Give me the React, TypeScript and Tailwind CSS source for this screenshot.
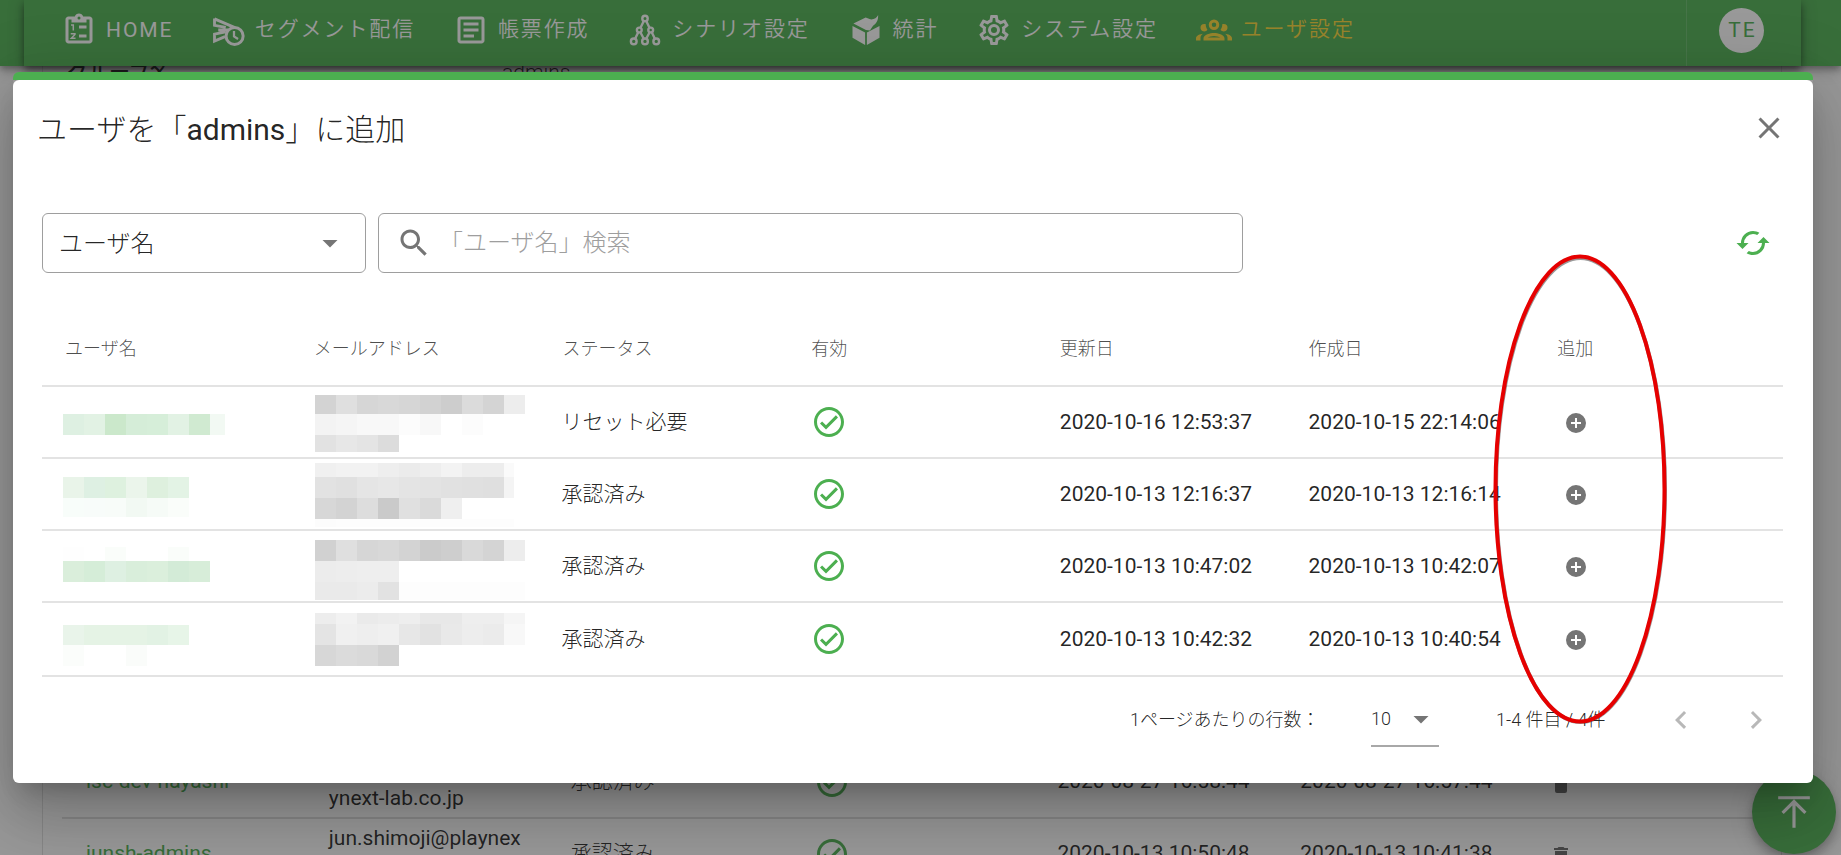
import type { ReactNode } from "react";

const CHECK_CIRCLE =
  "M12 2C6.5 2 2 6.5 2 12S6.5 22 12 22 22 17.5 22 12 17.5 2 12 2M12 20C7.59 20 4 16.41 4 12S7.59 4 12 4 20 7.59 20 12 16.41 20 12 20M16.59 7.58L10 14.17L7.41 11.59L6 13L10 17L18 9L16.59 7.58Z";
const PLUS_CIRCLE = "M17 13H13V17H11V13H7V11H11V7H13V11H17M12 2A10 10 0 0 0 2 12A10 10 0 0 0 12 22A10 10 0 0 0 22 12A10 10 0 0 0 12 2Z";
const CLOSE = "M19 6.41L17.59 5L12 10.59L6.41 5L5 6.41L10.59 12L5 17.59L6.41 19L12 13.41L17.59 19L19 17.59L13.41 12L19 6.41Z";
const MENU_DOWN = "M7 10L12 15L17 10H7Z";
const MAGNIFY =
  "M15.5 14h-.79l-.28-.27C15.41 12.59 16 11.11 16 9.5 16 5.91 13.09 3 9.5 3S3 5.91 3 9.5 5.91 16 9.5 16c1.61 0 3.09-.59 4.23-1.57l.27.28v.79l5 4.99L20.49 19l-4.99-5zm-6 0C7.01 14 5 11.99 5 9.5S7.01 5 9.5 5 14 7.01 14 9.5 11.99 14 9.5 14z";
const CACHED =
  "M19 8L15 12H18A6 6 0 0 1 12 18C11 18 10.03 17.75 9.2 17.3L7.74 18.76C8.97 19.54 10.43 20 12 20A8 8 0 0 0 20 12H23M6 12A6 6 0 0 1 12 6C13 6 13.97 6.25 14.8 6.7L16.26 5.24C15.03 4.46 13.57 4 12 4A8 8 0 0 0 4 12H1L5 16L9 12";
const CHEVRON_LEFT = "M15.41 16.58L10.83 12L15.41 7.41L14 6L8 12L14 18L15.41 16.58Z";
const CHEVRON_RIGHT = "M8.59 16.58L13.17 12L8.59 7.41L10 6L16 12L10 18L8.59 16.58Z";
const DELETE = "M19 4H15.5L14.5 3H9.5L8.5 4H5V6H19M6 19A2 2 0 0 0 8 21H16A2 2 0 0 0 18 19V7H6V19Z";
const ARROW_TOP = "M4.08 11.92L12 4L19.92 11.92L18.5 13.33L13 7.83V22H11V7.83L5.5 13.33L4.08 11.92M12 4H22V2H2V4H12Z";
const COG =
  "M12,8A4,4 0 0,1 16,12A4,4 0 0,1 12,16A4,4 0 0,1 8,12A4,4 0 0,1 12,8M12,10A2,2 0 0,0 10,12A2,2 0 0,0 12,14A2,2 0 0,0 14,12A2,2 0 0,0 12,10M10,22C9.75,22 9.54,21.82 9.5,21.58L9.13,18.93C8.5,18.68 7.96,18.34 7.44,17.94L4.95,18.95C4.73,19.03 4.46,18.95 4.34,18.73L2.34,15.27C2.21,15.05 2.27,14.78 2.46,14.63L4.57,12.97L4.5,12L4.57,11L2.46,9.37C2.27,9.22 2.21,8.95 2.34,8.73L4.34,5.27C4.46,5.05 4.73,4.96 4.95,5.05L7.44,6.05C7.96,5.66 8.5,5.32 9.13,5.07L9.5,2.42C9.54,2.18 9.75,2 10,2H14C14.25,2 14.46,2.18 14.5,2.42L14.87,5.07C15.5,5.32 16.04,5.66 16.56,6.05L19.05,5.05C19.27,4.96 19.54,5.05 19.66,5.27L21.66,8.73C21.79,8.95 21.73,9.22 21.54,9.37L19.43,11L19.5,12L19.43,13L21.54,14.63C21.73,14.78 21.79,15.05 21.66,15.27L19.66,18.73C19.54,18.95 19.27,19.04 19.05,18.95L16.56,17.95C16.04,18.34 15.5,18.68 14.87,18.93L14.5,21.58C14.46,21.82 14.25,22 14,22H10M11.25,4L10.88,6.61C9.68,6.86 8.62,7.5 7.85,8.39L5.44,7.35L4.69,8.65L6.8,10.2C6.4,11.37 6.4,12.64 6.8,13.8L4.68,15.36L5.43,16.66L7.86,15.62C8.63,16.5 9.68,17.14 10.87,17.38L11.24,20H12.76L13.13,17.39C14.32,17.14 15.37,16.5 16.14,15.62L18.57,16.66L19.32,15.36L17.2,13.81C17.6,12.64 17.6,11.37 17.2,10.2L19.31,8.65L18.56,7.35L16.15,8.39C15.38,7.5 14.32,6.86 13.12,6.62L12.75,4H11.25Z";
const ACCOUNT_GROUP =
  "M12,5A3.5,3.5 0 0,0 8.5,8.5A3.5,3.5 0 0,0 12,12A3.5,3.5 0 0,0 15.5,8.5A3.5,3.5 0 0,0 12,5M12,7A1.5,1.5 0 0,1 13.5,8.5A1.5,1.5 0 0,1 12,10A1.5,1.5 0 0,1 10.5,8.5A1.5,1.5 0 0,1 12,7M5.5,8A2.5,2.5 0 0,0 3,10.5C3,11.44 3.53,12.25 4.29,12.68C4.65,12.88 5.06,13 5.5,13C5.94,13 6.35,12.88 6.71,12.68C7.08,12.47 7.39,12.17 7.62,11.81C6.89,10.86 6.5,9.7 6.5,8.5C6.5,8.41 6.5,8.31 6.5,8.22C6.2,8.08 5.86,8 5.5,8M18.5,8C18.14,8 17.8,8.08 17.5,8.22C17.5,8.31 17.5,8.41 17.5,8.5C17.5,9.7 17.11,10.86 16.38,11.81C16.5,12 16.63,12.15 16.78,12.3C16.94,12.45 17.1,12.58 17.29,12.68C17.65,12.88 18.06,13 18.5,13C18.94,13 19.35,12.88 19.71,12.68C20.47,12.25 21,11.44 21,10.5A2.5,2.5 0 0,0 18.5,8M12,14C9.66,14 5,15.17 5,17.5V19H19V17.5C19,15.17 14.34,14 12,14M4.71,14.55C2.78,14.78 0,15.76 0,17.5V19H3V17.07C3,16.06 3.69,15.22 4.71,14.55M19.29,14.55C20.31,15.22 21,16.06 21,17.07V19H24V17.5C24,15.76 21.22,14.78 19.29,14.55M12,16C13.53,16 15.24,16.5 16.23,17H7.77C8.76,16.5 10.47,16 12,16Z";
const TEXT_BOX =
  "M5 3C3.89 3 3 3.89 3 5V19C3 20.11 3.89 21 5 21H19C20.11 21 21 20.11 21 19V5C21 3.89 20.11 3 19 3H5M5 5H19V19H5V5M7 7V9H17V7H7M7 11V13H17V11H7M7 15V17H14V15H7Z";

function Icon({ d, className }: { d: string; className: string }) {
  return (
    <svg viewBox="0 0 24 24" fill="currentColor" className={"shrink-0 " + className}>
      <path d={d} />
    </svg>
  );
}

function NavSvg({ children }: { children: ReactNode }) {
  return (
    <svg viewBox="0 0 24 24" fill="none" stroke="currentColor" className="size-9 shrink-0">
      {children}
    </svg>
  );
}

const clipboardIcon = (
  <NavSvg>
    <path
      fill="currentColor"
      stroke="none"
      fillRule="evenodd"
      d="M19 3H14.82C14.4 1.84 13.3 1 12 1S9.6 1.84 9.18 3H5C3.9 3 3 3.9 3 5V19C3 20.1 3.9 21 5 21H19C20.1 21 21 20.1 21 19V5C21 3.9 20.1 3 19 3M12 3A1 1 0 0 1 12 5A1 1 0 0 1 12 3M5 5H7V7H17V5H19V19H5Z"
    />
    <path strokeWidth="1" d="M6.7 8.6H8.2V12.3M6.5 14.5H9.3V15L6.9 17.5H9.7" />
    <path strokeWidth="2" d="M12 10H17M12 16H17" />
  </NavSvg>
);

const sendClockIcon = (
  <NavSvg>
    <path strokeWidth="1.9" d="M3 4.6L16.6 10.4M3 4.4V8.9L10.5 10.3M10.5 13.3L3 14.8V19.4L10 16.4M5.5 12H12" />
    <circle cx="16.4" cy="16" r="5.7" strokeWidth="2" />
    <path strokeWidth="1.5" d="M16 12.6V16.3L18.7 18" />
  </NavSvg>
);

const treeIcon = (
  <NavSvg>
    <g strokeWidth="1.6">
      <circle cx="12" cy="4.3" r="1.8" />
      <circle cx="8.2" cy="12" r="1.6" />
      <circle cx="15.8" cy="12" r="1.6" />
      <circle cx="4.5" cy="19.6" r="1.9" />
      <circle cx="12" cy="19.6" r="1.9" />
      <circle cx="19.5" cy="19.6" r="1.9" />
      <path d="M11.2 6L9 10.5M12.8 6L15 10.5M7.5 13.5L5.4 17.9M8.9 13.5L11.2 17.8M15.1 13.5L12.8 17.8M16.5 13.5L18.6 17.9" />
    </g>
  </NavSvg>
);

const boxIcon = (
  <NavSvg>
    <g fill="currentColor" stroke="none">
      <path d="M3 9.3L11.4 13.7V22L3 17.2Z" />
      <path d="M21 9.3L12.6 13.7V22L21 17.2Z" />
      <path d="M3.6 7.7L11.8 3.6L14.8 4.9C17.2 5.2 19.2 4 20.1 2C20.2 5.4 19.2 7.4 16.7 9.2L14.6 12.3L12 12Z" />
    </g>
  </NavSvg>
);

const navItems: { label: string; icon: ReactNode; tone: string }[] = [
  { label: "HOME", icon: clipboardIcon, tone: "text-white" },
  { label: "セグメント配信", icon: sendClockIcon, tone: "text-white" },
  { label: "帳票作成", icon: <Icon d={TEXT_BOX} className="size-9" />, tone: "text-white" },
  { label: "シナリオ設定", icon: treeIcon, tone: "text-white" },
  { label: "統計", icon: boxIcon, tone: "text-white" },
  { label: "システム設定", icon: <Icon d={COG} className="size-9" />, tone: "text-white" },
  { label: "ユーザ設定", icon: <Icon d={ACCOUNT_GROUP} className="size-9" />, tone: "text-[#fdd835]" },
];

function Header() {
  return (
    <header className="relative z-10 h-[66px] bg-[#4caf50] pr-10 pl-6 shadow-[0_3px_6px_rgba(0,0,0,0.3),0_6px_12px_rgba(0,0,0,0.2)]">
      <div className="flex h-full bg-[#4caf50] shadow-[0_3px_6px_-1px_rgba(0,0,0,0.3),0_6px_8px_rgba(0,0,0,0.25),0_1px_15px_rgba(0,0,0,0.25)]">
        <nav className="flex h-[59px] flex-1 items-center gap-[37.8px] pl-[37px]">
          {navItems.map((item) => (
            <div key={item.label} className={"flex items-center gap-[9px] " + item.tone}>
              {item.icon}
              <span
                className={
                  item.label === "HOME"
                    ? "relative top-px w-[66px] text-[21px] leading-none font-[450] tracking-[1.9px]"
                    : "text-[21px] leading-none font-[350] tracking-[1.9px] whitespace-nowrap"
                }
              >
                {item.label}
              </span>
            </div>
          ))}
        </nav>
        <div className="flex w-[115px] justify-start border-l border-white/15 pt-2 pl-8">
          <div className="flex size-[45px] items-center justify-center rounded-full bg-white pl-[2px] text-[21px] tracking-[1.9px] text-[#4caf50]">
            TE
          </div>
        </div>
      </div>
    </header>
  );
}

const members = [
  { name: "isc-dev-hayashi", mail: ["yuki.hayashi@pla", "ynext-lab.co.jp"], updated: "2020-08-27 16:58:44", created: "2020-08-27 16:57:44" },
  { name: "junsh-admins", mail: ["jun.shimoji@playnex", "t-lab.co.jp"], updated: "2020-10-13 10:50:48", created: "2020-10-13 10:41:38" },
];

function BackgroundPage() {
  return (
    <div className="flex h-[789px] flex-col pr-[59px] pl-[42px]">
      <div className="flex flex-1 flex-col border-x border-black/12 px-[19px]">
        <div className="flex h-3 items-center px-[5px] text-[21px] leading-none text-black/87">
          <div className="w-[435px] font-medium">グループ名</div>
          <div className="font-[350]">admins</div>
        </div>
        <div className="mt-[669px]">
          {members.map((m) => (
            <div key={m.name} className="grid h-[72px] grid-cols-7 items-center border-b-2 border-black/12 text-[21px] font-[370] text-black/87">
              <div className="pl-6 whitespace-nowrap text-[#4caf50]">{m.name}</div>
              <div className="pt-px pl-6 leading-[31.5px]">
                <div>{m.mail[0]}</div>
                <div>{m.mail[1]}</div>
              </div>
              <div className="pl-[23px] font-light">承認済み</div>
              <div className="pl-[23px]">
                <Icon d={CHECK_CIRCLE} className="size-9 text-[#4caf50]" />
              </div>
              <div className="pl-6 whitespace-nowrap">{m.updated}</div>
              <div className="pl-6 whitespace-nowrap">{m.created}</div>
              <div className="pt-1 pl-[30px]">
                <Icon d={DELETE} className="size-6 text-black/60" />
              </div>
            </div>
          ))}
        </div>
      </div>
    </div>
  );
}

type Band = { h: number; cells: string[]; last?: number };
type Row = {
  status: string;
  updated: string;
  created: string;
  nameTop: number;
  name: Band[];
  mailTop: number;
  mail: Band[];
};

const rows: Row[] = [
  {
    status: "リセット必要",
    updated: "2020-10-16 12:53:37",
    created: "2020-10-15 22:14:06",
    nameTop: 27,
    name: [{ h: 21, last: 15, cells: ["#def0e2", "#e2f2e4", "#cbe8cb", "#d5edd8", "#d6eed9", "#e2f2e4", "#d0ead1", "#f2f9f3"] }],
    mailTop: 8,
    mail: [
      { h: 19, cells: ["#d3d3d3", "#dfdfdf", "#d6d6d6", "#d8d8d8", "#d6d6d6", "#d2d2d2", "#cdcdcd", "#dbdbdb", "#d4d4d4", "#ededed"] },
      { h: 21, cells: ["#f3f3f3", "#f5f5f5", "#f8f8f8", "#f8f8f8", "#fcfcfc", "#f8f8f8", "#ffffff", "#fcfcfc"] },
      { h: 17, cells: ["#e2e2e2", "#e7e7e7", "#e4e4e4", "#dcdcdc"] },
    ],
  },
  {
    status: "承認済み",
    updated: "2020-10-13 12:16:37",
    created: "2020-10-13 12:16:14",
    nameTop: 18,
    name: [
      { h: 21, cells: ["#e9f4e9", "#def0e3", "#def1df", "#ebf5eb", "#def0de", "#e3f3e5"] },
      { h: 19, cells: ["#f8fdfa", "#f8fcfa", "#f8fcf9", "#f2f9f3", "#f6fbf7", "#fafdfa"] },
    ],
    mailTop: 4,
    mail: [
      { h: 14, last: 10, cells: ["#f0f0f0", "#f2f2f2", "#f2f2f2", "#eeeeee", "#ebebeb", "#eeeeee", "#f3f3f3", "#ededed", "#ededed", "#fafafa"] },
      { h: 21, last: 10, cells: ["#e2e2e2", "#e0e0e0", "#e5e5e5", "#e7e7e7", "#e4e4e4", "#e3e3e3", "#e1e1e1", "#e0e0e0", "#dfdfdf", "#f4f4f4"] },
      { h: 21, cells: ["#d7d7d7", "#d3d3d3", "#dddddd", "#cacaca", "#e0e0e0", "#dadada", "#efefef"] },
      { h: 8, last: 10, cells: ["#fcfcfc", "#fdfdfd", "#fdfdfd", "#fdfdfd", "#fdfdfd", "#fdfdfd", "#fdfdfd", "#fdfdfd", "#fdfdfd", "#fdfdfd"] },
    ],
  },
  {
    status: "承認済み",
    updated: "2020-10-13 10:47:02",
    created: "2020-10-13 10:42:07",
    nameTop: 16,
    name: [
      { h: 14, cells: ["#fefefe", "#ffffff", "#fafdfa", "#ffffff", "#ffffff", "#fafdfa"] },
      { h: 21, cells: ["#daeedb", "#d5edd8", "#def0e2", "#d9eedb", "#dbefdc", "#d3ebd7", "#d7edd9"] },
    ],
    mailTop: 9,
    mail: [
      { h: 21, cells: ["#d1d1d1", "#dfdfdf", "#d6d6d6", "#d8d8d8", "#d3d3d3", "#cbcbcb", "#cecece", "#d9d9d9", "#d4d4d4", "#ededed"] },
      { h: 21, cells: ["#ececec", "#ededed", "#eeeeee", "#eeeeee"] },
      { h: 18, cells: ["#eaeaea", "#eaeaea", "#ececec", "#e2e2e2", "#fdfdfd", "#fdfdfd", "#fdfdfd", "#fdfdfd", "#fdfdfd", "#fdfdfd"] },
    ],
  },
  {
    status: "承認済み",
    updated: "2020-10-13 10:42:32",
    created: "2020-10-13 10:40:54",
    nameTop: 22,
    name: [
      { h: 20, cells: ["#e9f4ea", "#e5f3e5", "#e5f3e5", "#e5f3e5", "#e2f2e4", "#e7f5e8"] },
      { h: 21, cells: ["#fbfdfb", "#ffffff", "#ffffff", "#fafcfa"] },
    ],
    mailTop: 10,
    mail: [
      { h: 11, cells: ["#ededed", "#f2f2f2", "#eaeaea", "#ececec", "#eeeeee", "#e8e8e8", "#e8e8e8", "#eeeeee", "#eeeeee", "#f5f5f5"] },
      { h: 21, cells: ["#e4e4e4", "#f0f0f0", "#eeeeee", "#f0f0f0", "#e7e7e7", "#e2e2e2", "#e9e9e9", "#ededed", "#ebebeb", "#f8f8f8"] },
      { h: 21, cells: ["#d7d7d7", "#dbdbdb", "#d9d9d9", "#d2d2d2"] },
    ],
  },
];

const CELL = 21;

function Mosaic({ top, bands }: { top: number; bands: Band[] }) {
  return (
    <div style={{ paddingTop: top }}>
      {bands.map((band, i) => (
        <div key={i} className="flex">
          {band.cells.map((color, j) => (
            <div
              key={j}
              className="shrink-0"
              style={{
                width: j === band.cells.length - 1 ? (band.last ?? CELL) : CELL,
                height: band.h,
                backgroundColor: color,
              }}
            />
          ))}
        </div>
      ))}
    </div>
  );
}

const headings = ["ユーザ名", "メールアドレス", "ステータス", "有効", "更新日", "作成日", "追加"];

function UserTable() {
  return (
    <div className="mt-[38px]">
      <div className="grid h-[76px] grid-cols-7 items-center border-b-2 border-[#e3e3e3]">
        {headings.map((h) => (
          <div key={h} className="pt-[2px] pl-[23px] text-[18px] leading-none font-light text-black/70">
            {h}
          </div>
        ))}
      </div>
      {rows.map((r, i) => (
        <div
          key={i}
          className={
            "grid grid-cols-7 items-center border-b-2 border-[#e3e3e3] text-[21px] leading-none font-[370] text-black/87 " +
            (i === 3 ? "h-[74px]" : "h-[72px]")
          }
        >
          <div className="self-start pl-[21px]">
            <Mosaic top={r.nameTop} bands={r.name} />
          </div>
          <div className="self-start pl-6">
            <Mosaic top={r.mailTop} bands={r.mail} />
          </div>
          <div className="pl-[22px] font-light">{r.status}</div>
          <div className="pl-[23px]">
            <Icon d={CHECK_CIRCLE} className="size-9 text-[#4caf50]" />
          </div>
          <div className="pl-[23px] whitespace-nowrap">{r.updated}</div>
          <div className="pl-[23px] whitespace-nowrap">{r.created}</div>
          <div className="pt-px pl-[30px]">
            <Icon d={PLUS_CIRCLE} className="size-6 text-[#757575]" />
          </div>
        </div>
      ))}
    </div>
  );
}

function Pagination() {
  return (
    <div className="flex h-[85px] items-center justify-end pr-[9px] text-[18px] leading-none font-light text-black/87">
      <div className="w-[241px] pt-px">1ページあたりの行数：</div>
      <div className="flex h-[54px] w-[68px] items-center justify-between border-b-2 border-[#a8a8a8] pt-px font-[350]">
        <span>10</span>
        <Icon d={MENU_DOWN} className="size-9 text-[#757575]" />
      </div>
      <div className="ml-[57px] w-[167px] pt-px whitespace-nowrap">1-4 件目 / 4件</div>
      <Icon d={CHEVRON_LEFT} className="size-9 text-black/28" />
      <Icon d={CHEVRON_RIGHT} className="ml-[39px] size-9 text-black/28" />
    </div>
  );
}

function Dialog() {
  return (
    <div className="h-[711px] w-[1800px] rounded-[6px] shadow-[0_16px_22px_-10px_rgba(0,0,0,0.2),0_36px_57px_4px_rgba(0,0,0,0.14),0_14px_69px_12px_rgba(0,0,0,0.12)]">
      <div className="h-2 rounded-t-[6px] bg-[#4caf50]" />
      <div className="h-[703px] rounded-[6px] bg-white pt-[30px] pr-[30px] pl-[29px]">
        <div className="flex h-9 items-center justify-between">
          <h1 className="-ml-[5px] pt-[3px] text-[30px] leading-none font-light text-black/87">
            ユーザを「<span className="font-[370]">admins</span>」に追加
          </h1>
          <Icon d={CLOSE} className="-mr-1 size-9 text-[#757575]" />
        </div>
        <div className="mt-[67px] flex items-center text-[24px] leading-none font-light">
          <div className="flex h-[60px] w-[324px] items-center justify-between rounded-[6px] border border-[#9e9e9e] pr-[17px] pl-4 text-black/87">
            <span className="pt-px">ユーザ名</span>
            <Icon d={MENU_DOWN} className="size-9 text-[#757575]" />
          </div>
          <div className="ml-3 flex h-[60px] w-[865px] items-center rounded-[6px] border border-[#9e9e9e] pl-[17px]">
            <Icon d={MAGNIFY} className="size-9 text-[#757575]" />
            <span className="ml-[7px] pb-px text-[#9e9e9e]">「ユーザ名」検索</span>
          </div>
          <Icon d={CACHED} className="mr-3 ml-auto size-9 text-[#4caf50]" />
        </div>
        <UserTable />
        <Pagination />
      </div>
    </div>
  );
}

export default function App() {
  return (
    <div className="relative h-[855px] w-[1841px] overflow-hidden bg-white font-[Roboto,'Noto_Sans_CJK_JP',sans-serif]">
      <Header />
      <BackgroundPage />
      <div className="absolute top-[770px] left-[1752px] flex size-[84px] items-center justify-center rounded-full bg-[#4caf50] text-white shadow-[0_5px_8px_-1px_rgba(0,0,0,0.2),0_9px_15px_rgba(0,0,0,0.14),0_2px_27px_rgba(0,0,0,0.12)]">
        <Icon d={ARROW_TOP} className="size-[38px]" />
      </div>
      <div className="absolute inset-0 z-20 bg-[#212121]/46" />
      <div className="absolute top-[72px] left-[13px] z-30">
        <Dialog />
      </div>
      <svg className="absolute top-[250px] left-[1490px] z-40 h-[480px] w-[180px]" viewBox="0 0 180 480" fill="none">
        <ellipse cx="90.5" cy="240" rx="84.5" ry="232" stroke="#333" strokeOpacity="0.5" strokeWidth="4" />
        <ellipse cx="90" cy="239" rx="84.5" ry="232.5" stroke="#e60000" strokeWidth="4" />
      </svg>
    </div>
  );
}
